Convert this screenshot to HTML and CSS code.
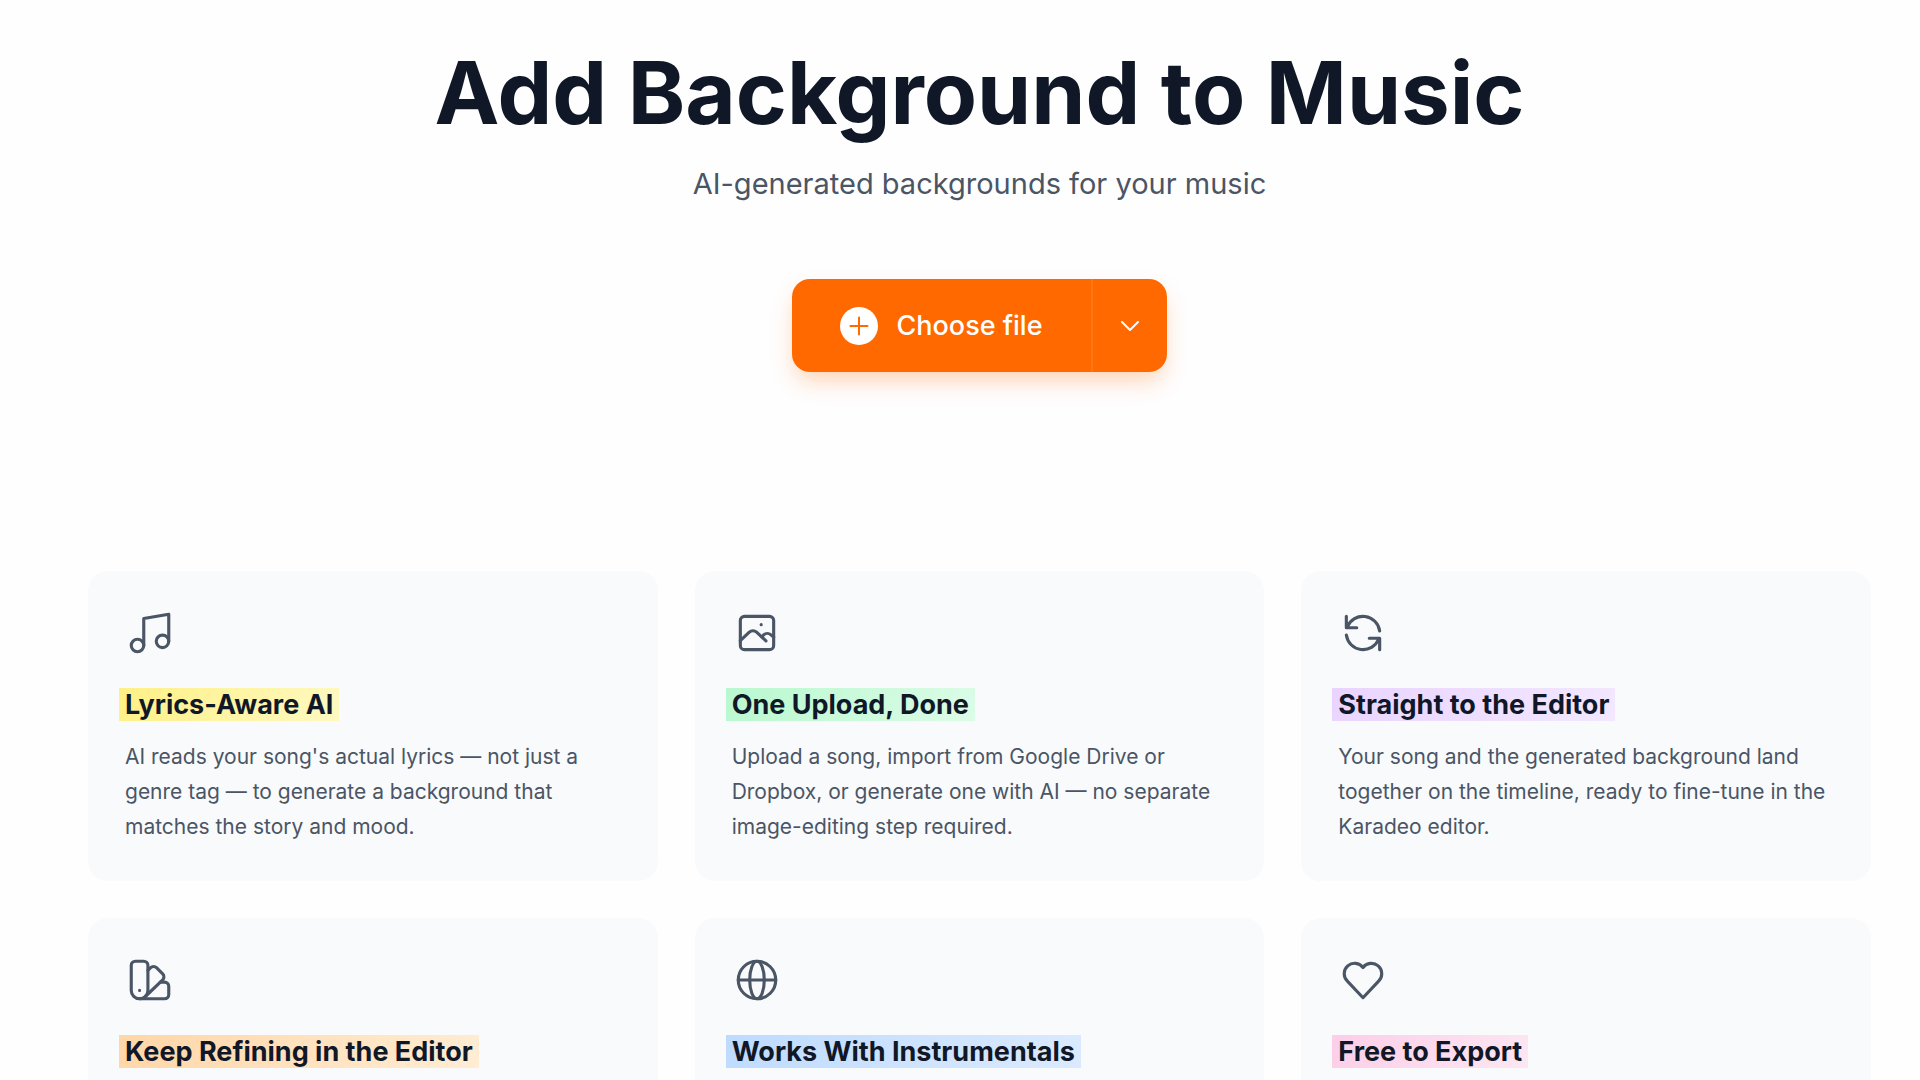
FILE: index.html
```html
<!DOCTYPE html>
<html lang="en">
<head>
    <meta charset="UTF-8">
    <meta name="viewport" content="width=device-width, initial-scale=1.0">
    <title>Add Background to Music</title>
    <link rel="stylesheet" href="styles.css">
</head>
<body>
    <header class="hero">
        <h1>Add Background to Music</h1>
        <p class="subtitle">AI-generated backgrounds for your music</p>
        <div class="upload">
            <button type="button" class="choose">
                <svg class="plus" viewBox="0 0 38 38" aria-hidden="true">
                    <circle cx="19" cy="19" r="19" fill="#fff"/>
                    <path d="M19 10.5v17M10.5 19h17" stroke="#ff6900" stroke-width="2" stroke-linecap="round"/>
                </svg>
                Choose file
            </button>
            <button type="button" class="more" aria-label="More sources">
                <svg class="chevron" viewBox="0 0 24 24" aria-hidden="true"><path d="m4 8 8 8 8-8"/></svg>
            </button>
        </div>
    </header>

    <main class="features">
        <article class="card">
            <svg class="icon" viewBox="0 0 24 24" aria-hidden="true">
                <circle cx="6" cy="18" r="3"/>
                <circle cx="18" cy="16" r="3"/>
                <path d="M9 18V5l12-2v13"/>
            </svg>
            <h3><span class="mark yellow">Lyrics-Aware AI</span></h3>
            <p>AI reads your song's actual lyrics — not just a genre tag — to generate a background that matches the story and mood.</p>
        </article>
        <article class="card">
            <svg class="icon" viewBox="0 0 24 24" aria-hidden="true">
                <rect x="4" y="4" width="16" height="16" rx="2"/>
                <path d="m4 15.700 4.300-4.100c1-.9 2.500-.9 3.500 0l4.500 4.200"/>
                <path d="m14.300 13.800.9-.9c1-.9 2.500-.9 3.500 0l1.300 1.100"/>
                <path d="M14 8h.01"/>
            </svg>
            <h3><span class="mark green">One Upload, Done</span></h3>
            <p>Upload a song, import from Google Drive or Dropbox, or generate one with AI — no separate image-editing step required.</p>
        </article>
        <article class="card">
            <svg class="icon" viewBox="0 0 24 24" aria-hidden="true">
                <path d="M20 11A8.1 8.1 0 0 0 4.500 9M4 4v5.500h5"/>
                <path d="M4 13a8.1 8.1 0 0 0 15.500 2M20 20v-5.500h-5"/>
            </svg>
            <h3><span class="mark purple">Straight to the Editor</span></h3>
            <p>Your song and the generated background land together on the timeline, ready to fine-tune in the Karadeo editor.</p>
        </article>
        <article class="card">
            <svg class="icon" viewBox="0 0 24 24" aria-hidden="true">
                <path d="M3 5a2 2 0 0 1 2-2h4a2 2 0 0 1 2 2v12a4 4 0 0 1-8 0z"/>
                <path d="m11 7.400 1.300-1.300a2 2 0 0 1 2.800 0l3 3a2 2 0 0 1 0 2.800L9.900 19.800"/>
                <path d="M16.900 13H19a2 2 0 0 1 2 2v4a2 2 0 0 1-2 2H7M7 17v.01"/>
            </svg>
            <h3><span class="mark orange">Keep Refining in the Editor</span></h3>
        </article>
        <article class="card">
            <svg class="icon" viewBox="0 0 24 24" aria-hidden="true">
                <circle cx="12" cy="12" r="9"/>
                <ellipse cx="12" cy="12" rx="3.500" ry="9"/>
                <path d="M3 12h18"/>
            </svg>
            <h3><span class="mark blue">Works With Instrumentals</span></h3>
        </article>
        <article class="card">
            <svg class="icon" viewBox="0 0 24 24" aria-hidden="true">
                <path d="M19.500 12.572 12 20.500l-7.500-7.928A5 5 0 1 1 12 6.006a5 5 0 1 1 7.500 6.572"/>
            </svg>
            <h3><span class="mark pink">Free to Export</span></h3>
        </article>
    </main>
</body>
</html>
```
FILE: styles.css
```css
* {
    box-sizing: border-box;
}
body {
    font-family: Inter, "Liberation Sans", sans-serif;
    background-color: #fefefe;
    color: #101828;
    margin: 0;
    padding: 48px 49px 48px 88px;
}
h1, h3, p {
    margin: 0;
}
.hero {
    display: flex;
    flex-direction: column;
    align-items: center;
    text-align: center;
    margin-bottom: 199px;
}
.hero h1 {
    font-size: 87px;
    line-height: 90px;
    font-weight: 700;
    margin-bottom: 27px;
}
.subtitle {
    font-size: 29px;
    line-height: 38px;
    color: #4a5565;
    margin-bottom: 76px;
}
.upload {
    display: flex;
    height: 93px;
    border-radius: 18px;
    overflow: hidden;
    box-shadow: 0 12px 24px -4px rgba(255, 105, 0, 0.3);
}
.upload button {
    display: flex;
    align-items: center;
    background-color: #ff6900;
    color: white;
    border: none;
    font-family: inherit;
    cursor: pointer;
}
.upload button:hover {
    background-color: #f56300;
}
.upload .choose {
    gap: 18px;
    padding: 0 48px;
    font-size: 27px;
    font-weight: 500;
}
.upload .more {
    justify-content: center;
    width: 76px;
    padding: 0;
    border-left: 2px solid #ff7714;
}
.plus {
    width: 38px;
    height: 38px;
}
.chevron {
    width: 24px;
    height: 24px;
    fill: none;
    stroke: white;
    stroke-width: 2;
    stroke-linecap: round;
    stroke-linejoin: round;
}
.features {
    display: grid;
    grid-template-columns: repeat(3, 1fr);
    gap: 37px;
}
.card {
    background-color: #f9fafc;
    border-radius: 20px;
    padding: 37px;
}
.card h3 {
    font-size: 27px;
    line-height: 37px;
    font-weight: 700;
    margin-bottom: 16px;
}
.card p {
    font-size: 21px;
    line-height: 35px;
    color: #4a5565;
}
.icon {
    display: block;
    width: 50px;
    height: 50px;
    margin-bottom: 28px;
    fill: none;
    stroke: #4a5565;
    stroke-width: 1.5;
    stroke-linecap: round;
    stroke-linejoin: round;
}
.mark {
    padding: 0 6px;
    margin-left: -6px;
}
.yellow {
    background: linear-gradient(120deg, #fff085, #fef9c2);
}
.green {
    background: linear-gradient(120deg, #b9f8cf, #dcfce7);
}
.purple {
    background: linear-gradient(120deg, #e9d4ff, #f3e8ff);
}
.orange {
    background: linear-gradient(120deg, #ffd6a7, #ffedd4);
}
.blue {
    background: linear-gradient(120deg, #bedbff, #dbeafe);
}
.pink {
    background: linear-gradient(120deg, #fccee8, #fce7f3);
}
```
